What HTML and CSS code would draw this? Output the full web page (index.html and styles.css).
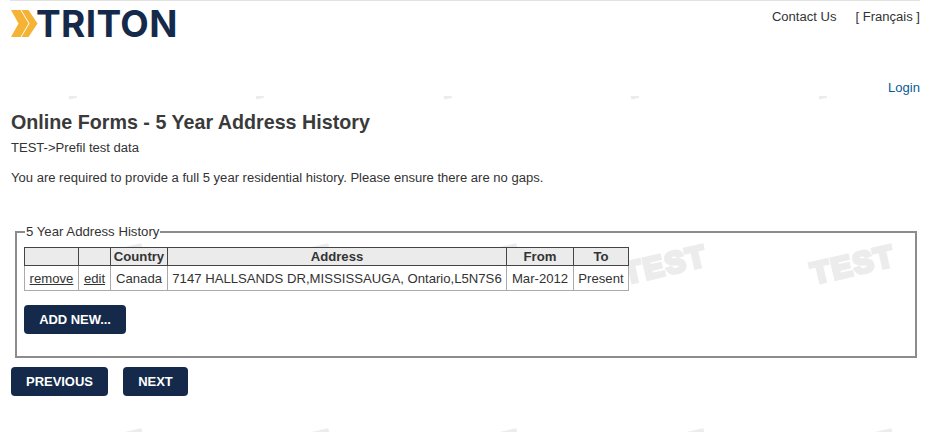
FILE: index.html
```html
<!DOCTYPE html>
<html lang="en">
<head>
<meta charset="utf-8">
<title>Online Forms - 5 Year Address History</title>
<link rel="stylesheet" href="styles.css">
</head>
<body>
<header class="top">
  <div class="top-row">
    <a class="logo" href="#">
      <svg class="logo-mark" viewBox="0 0 27 27" width="27" height="27" aria-hidden="true">
        <polygon points="0,0 9.5,0 17.5,13.5 9.5,27 0,27 7.5,13.5" fill="#f5b335"/>
        <polygon points="10.5,0 17.5,0 26.5,13.5 17.5,27 10.5,27 18.5,13.5" fill="#f5b335"/>
      </svg>
      <span class="logo-text">TRITON</span>
    </a>
    <nav class="links">
      <a href="#">Contact Us</a>
      <a href="#">[ Français ]</a>
    </nav>
  </div>
  <div class="login-row"><a href="#">Login</a></div>
</header>
<main class="content">
  <h1>Online Forms - 5 Year Address History</h1>
  <p class="prefill">TEST-&gt;Prefil test data</p>
  <p class="intro">You are required to provide a full 5 year residential history. Please ensure there are no gaps.</p>
  <fieldset class="history">
    <legend>5 Year Address History</legend>
    <table>
      <thead>
        <tr><th class="c1"></th><th class="c2"></th><th class="c3">Country</th><th class="c4">Address</th><th class="c5">From</th><th class="c6">To</th></tr>
      </thead>
      <tbody>
        <tr>
          <td><a href="#">remove</a></td>
          <td><a href="#">edit</a></td>
          <td>Canada</td>
          <td>7147 HALLSANDS DR,MISSISSAUGA, Ontario,L5N7S6</td>
          <td>Mar-2012</td>
          <td>Present</td>
        </tr>
      </tbody>
    </table>
    <button class="btn btn-add" type="button">ADD NEW...</button>
  </fieldset>
  <div class="actions">
    <button class="btn btn-prev" type="button">PREVIOUS</button>
    <button class="btn btn-next" type="button">NEXT</button>
  </div>
</main>
</body>
</html>
```
FILE: styles.css
```css
* { box-sizing: border-box; }
html, body { margin: 0; padding: 0; }
body {
  height: 432px;
  overflow: hidden;
  color: #333;
  font-family: "Liberation Sans", Arial, sans-serif;
  font-size: 13.06px;
  background-color: #fff;
  background-image: url("data:image/svg+xml,%3Csvg xmlns='http://www.w3.org/2000/svg' width='187.5' height='185'%3E%3Ctext x='0' y='0' transform='translate(9 49) rotate(-13)' font-family='Liberation Sans' font-weight='700' font-size='30' letter-spacing='2' stroke='%23ececec' stroke-width='3.5' fill='%23ececec'%3ETEST%3C/text%3E%3C/svg%3E");
  background-position: 55px 235px;
  background-repeat: repeat;
}
a { color: inherit; }

.top {
  height: 96px;
  background: #fff;
  padding: 0 9px 0 10px;
}
.top-row {
  display: flex;
  justify-content: space-between;
  border-top: 1px solid #e2e2e2;
  height: 80px;
}
.logo {
  display: flex;
  align-items: flex-start;
  padding: 8px 0 0 1px;
  text-decoration: none;
  height: 40px;
}
.logo-mark { margin: 1px -2px 0 0; flex: none; }
.logo-text {
  font-family: Inter, "Liberation Sans", sans-serif;
  font-weight: 700;
  font-size: 37px;
  line-height: 30px;
  letter-spacing: 0.35px;
  color: #152a4a;
}
.links {
  display: flex;
  gap: 19px;
  padding-top: 8px;
  line-height: 15px;
}
.links a { text-decoration: none; }
.login-row {
  display: flex;
  justify-content: flex-end;
  line-height: 15px;
}
.login-row a { color: #0b5a94; text-decoration: none; }

.content { padding: 0 12px 0 11px; }
h1 {
  margin: 14px 0 0;
  font-size: 19.7px;
  line-height: 24px;
  font-weight: 700;
  color: #3a3a3a;
}
.prefill { margin: 6px 0 0; line-height: 15px; }
.intro { margin: 15px 0 0; line-height: 15px; }

.history {
  margin: 39px 0 0 4px;
  padding: 8px 7px 22px;
  height: 134px;
  border: 2px solid #8c8c8c;
  min-width: 0;
}
.history legend {
  margin-left: 1px;
  padding: 0 1px;
  font-size: 13.2px;
  line-height: 15px;
}
table {
  border-collapse: collapse;
  table-layout: fixed;
  width: 604px;
  font-size: 13.15px;
}
.c1 { width: 54px; }
.c2 { width: 32px; }
.c3 { width: 57px; }
.c4 { width: 339px; }
.c5 { width: 67px; }
.c6 { width: 55px; }
th {
  height: 18px;
  padding: 0;
  background: #ebebeb;
  border: 1px solid #444;
  font-weight: 700;
  text-align: center;
  line-height: 15px;
}
td {
  height: 25px;
  padding: 0;
  background: rgba(255, 255, 255, 0.92);
  border: 1px solid #aaa;
  text-align: center;
  white-space: nowrap;
  line-height: 15px;
}
.btn {
  height: 29px;
  padding: 0;
  border: 0;
  border-radius: 4px;
  background: #152a4a;
  color: #fff;
  font-family: "Liberation Sans", Arial, sans-serif;
  font-size: 13px;
  font-weight: 700;
  letter-spacing: -0.05px;
}
.btn-add { display: block; width: 102px; margin-top: 14px; }
.actions { display: flex; gap: 15px; margin-top: 9px; }
.btn-prev { width: 97px; }
.btn-next { width: 65px; }
```
